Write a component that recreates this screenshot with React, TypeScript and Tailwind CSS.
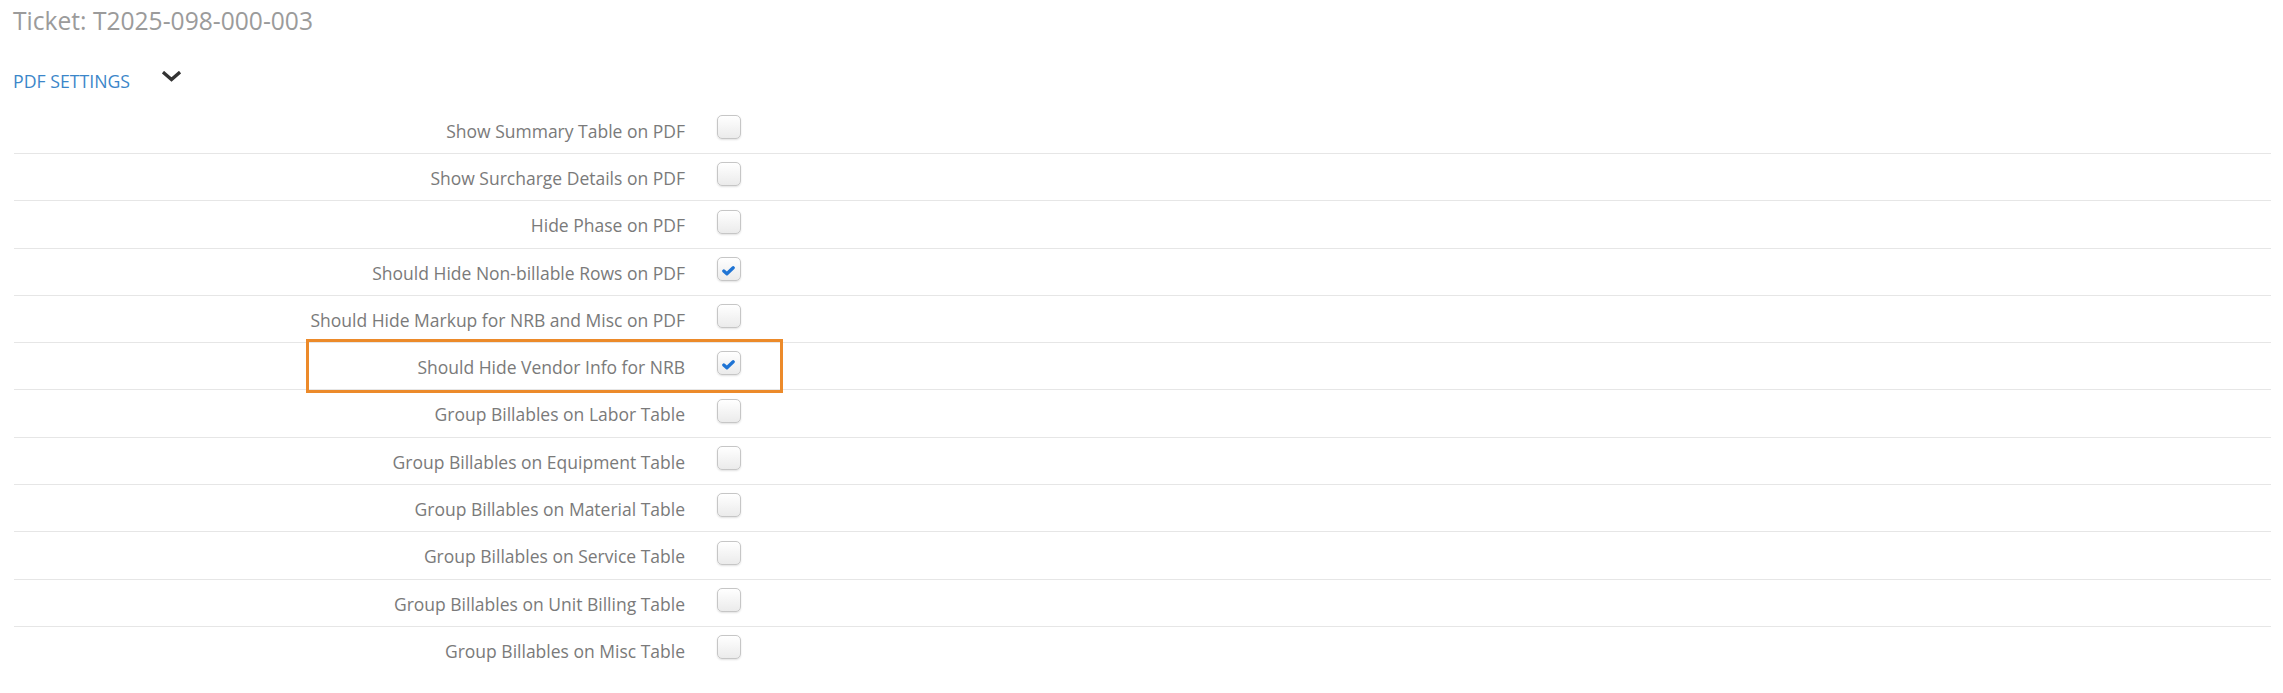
import React from "react";

const rows: { label: string; checked: boolean }[] = [
  { label: "Show Summary Table on PDF", checked: false },
  { label: "Show Surcharge Details on PDF", checked: false },
  { label: "Hide Phase on PDF", checked: false },
  { label: "Should Hide Non-billable Rows on PDF", checked: true },
  { label: "Should Hide Markup for NRB and Misc on PDF", checked: false },
  { label: "Should Hide Vendor Info for NRB", checked: true },
  { label: "Group Billables on Labor Table", checked: false },
  { label: "Group Billables on Equipment Table", checked: false },
  { label: "Group Billables on Material Table", checked: false },
  { label: "Group Billables on Service Table", checked: false },
  { label: "Group Billables on Unit Billing Table", checked: false },
  { label: "Group Billables on Misc Table", checked: false },
];

function Checkbox({ checked }: { checked: boolean }) {
  return (
    <div className="relative w-[24px] h-[24px] rounded-[5px] border border-[#c6c6c6] bg-linear-to-b from-white to-[#ebebeb] shadow-[0_1px_2px_rgba(0,0,0,0.12)]">
      {checked && (
        <svg
          className="absolute left-[4px] top-[8px]"
          width="13"
          height="10"
          viewBox="0 0 13 10"
          fill="none"
        >
          <polyline
            points="1.8,5 4.9,7.8 11.2,1.8"
            stroke="#1f74d4"
            strokeWidth="3.3"
            strokeLinecap="round"
            strokeLinejoin="round"
          />
        </svg>
      )}
    </div>
  );
}

export default function App() {
  return (
    <div className="relative min-h-[693px] bg-white pl-[14px] pr-[12px] font-['Open_Sans',sans-serif]">
      <div className="pt-[4px] text-[24.6px] leading-[34px] text-[#9b9b9b] -ml-[1px]">
        Ticket: T2025-098-000-003
      </div>
      <div className="mt-[30.5px] flex items-start">
        <span className="text-[17.7px] leading-[24px] text-[#3b86c9] -ml-[1px]">
          PDF SETTINGS
        </span>
        <svg
          className="ml-[32px] mt-[2.5px]"
          width="19"
          height="11"
          viewBox="0 0 19 11"
          fill="none"
        >
          <polyline
            points="2.2,2.2 9.5,8.6 16.8,2.2"
            stroke="#333333"
            strokeWidth="3.4"
            strokeLinecap="square"
            strokeLinejoin="miter"
          />
        </svg>
      </div>
      <div className="mt-[14.2px] flex flex-col">
        {rows.map((r, i) => (
          <div
            key={r.label}
            className={
              i < rows.length - 1
                ? "flex items-start h-[47.3px] border-b border-[#e6e6e6]"
                : "flex items-start h-[47.3px]"
            }
          >
            <div className="w-[671px] pt-[12px] text-right text-[17.5px] leading-[24px] text-[#7a7a7a]">
              {r.label}
            </div>
            <div className="ml-[32px] mt-[8.3px]">
              <Checkbox checked={r.checked} />
            </div>
          </div>
        ))}
      </div>
      <div className="pointer-events-none absolute left-[306px] top-[339px] w-[477px] h-[54px] border-[3px] border-[#ec8a2a]" />
    </div>
  );
}
